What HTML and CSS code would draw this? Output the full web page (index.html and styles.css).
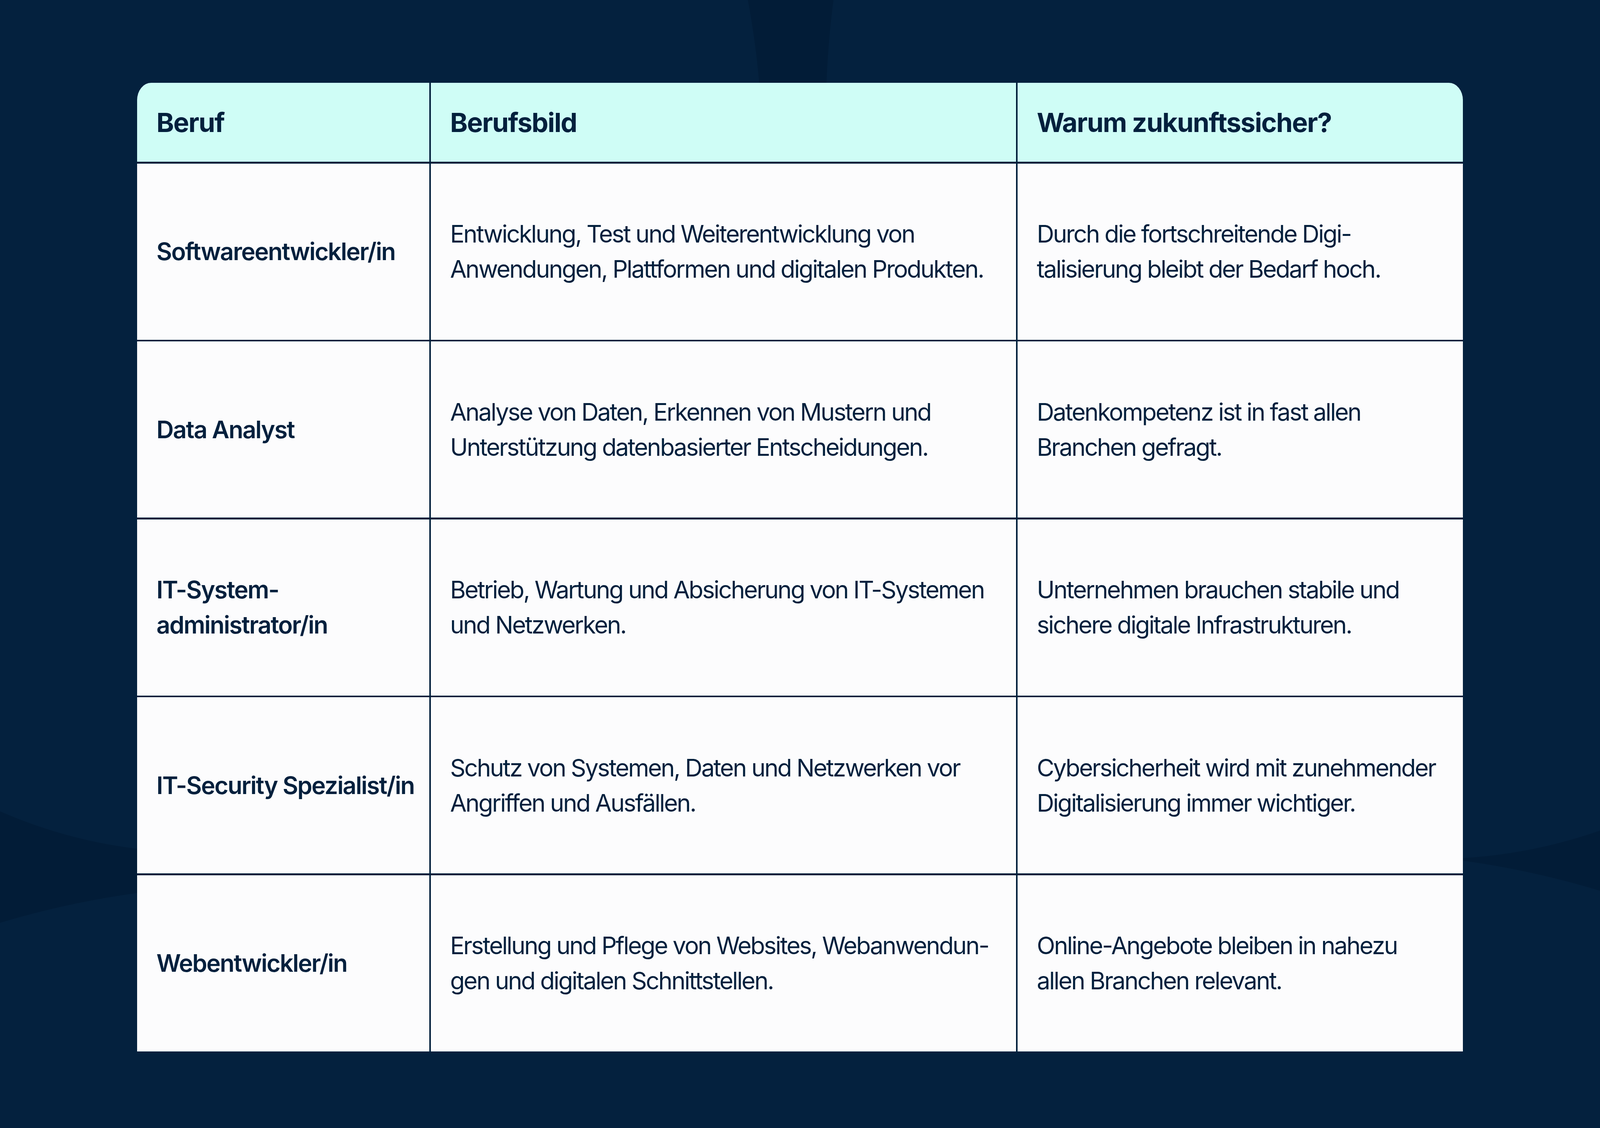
FILE: index.html
```html
<!DOCTYPE html>
<html lang="de">
<head>
<meta charset="utf-8">
<title>Zukunftssichere IT-Berufe</title>
<link rel="stylesheet" href="styles.css">
</head>
<body>
<main class="page">
  <div class="table">
    <div class="cell head">Beruf</div>
    <div class="cell head">Berufsbild</div>
    <div class="cell head">Warum zukunftssicher?</div>

    <div class="cell job">Softwareentwickler/in</div>
    <div class="cell">Entwicklung, Test und Weiterentwicklung von<br>Anwendungen, Plattformen und digitalen Produkten.</div>
    <div class="cell">Durch die fortschreitende Digi-<br>talisierung bleibt der Bedarf hoch.</div>

    <div class="cell job">Data Analyst</div>
    <div class="cell">Analyse von Daten, Erkennen von Mustern und<br>Unterstützung datenbasierter Entscheidungen.</div>
    <div class="cell">Datenkompetenz ist in fast allen<br>Branchen gefragt.</div>

    <div class="cell job">IT-System-<br>administrator/in</div>
    <div class="cell">Betrieb, Wartung und Absicherung von IT-Systemen<br>und Netzwerken.</div>
    <div class="cell">Unternehmen brauchen stabile und<br>sichere digitale Infrastrukturen.</div>

    <div class="cell job">IT-Security Spezialist/in</div>
    <div class="cell">Schutz von Systemen, Daten und Netzwerken vor<br>Angriffen und Ausfällen.</div>
    <div class="cell">Cybersicherheit wird mit zunehmender<br>Digitalisierung immer wichtiger.</div>

    <div class="cell job">Webentwickler/in</div>
    <div class="cell">Erstellung und Pflege von Websites, Webanwendun-<br>gen und digitalen Schnittstellen.</div>
    <div class="cell">Online-Angebote bleiben in nahezu<br>allen Branchen relevant.</div>
  </div>
</main>
</body>
</html>
```

FILE: styles.css
```css
:root {
  /* design grid: 5000 x 2888 units mapped onto the window */
  --u: calc(100vw / 5000);
  --v: calc(100vh / 2888);
}

html, body {
  margin: 0;
  padding: 0;
  overflow: hidden;
}

body {
  height: 100vh;
  font-family: Inter, "Noto Sans", "Liberation Sans", sans-serif;
  color: #03203d;
  background-color: #021c37;
  background-image:
    radial-gradient(ellipse calc(1783 * var(--u)) calc(1783 * var(--v)) at calc(600 * var(--u)) calc(399 * var(--v)), #04213e 99.9%, transparent 100%),
    radial-gradient(ellipse calc(3348 * var(--u)) calc(3348 * var(--v)) at calc(800 * var(--u)) calc(5613 * var(--v)), #04213e 99.95%, transparent 100%),
    radial-gradient(ellipse calc(1900 * var(--u)) calc(1900 * var(--v)) at calc(4480 * var(--u)) calc(300 * var(--v)), #04213e 99.9%, transparent 100%),
    radial-gradient(ellipse calc(3318 * var(--u)) calc(3318 * var(--v)) at calc(4200 * var(--u)) calc(5500 * var(--v)), #04213e 99.95%, transparent 100%);
  background-repeat: no-repeat;
}

.page {
  display: flex;
  justify-content: center;
  padding-top: calc(212 * var(--v));
}

.table {
  display: grid;
  grid-template-columns: calc(913 * var(--u)) calc(1829 * var(--u)) calc(1391 * var(--u));
  grid-template-rows: calc(202 * var(--v)) repeat(5, calc(451 * var(--v)));
  column-gap: calc(4.5 * var(--u));
  row-gap: calc(4.5 * var(--v));
  background: #03203c;
  border-radius: calc(44 * var(--u)) calc(44 * var(--u)) 0 0 / calc(44 * var(--v)) calc(44 * var(--v)) 0 0;
  overflow: hidden;
  flex: none;
}

.cell {
  display: flex;
  align-items: center;
  padding: 0 calc(30 * var(--u)) 0 calc(60 * var(--u));
  background: #fcfcfd;
  font-size: calc(75 * var(--u));
  line-height: calc(90 * var(--v));
  font-weight: 400;
  letter-spacing: -0.049em;
  white-space: nowrap;
  min-width: 0;
}

.cell.head {
  background: #cffdf6;
  font-size: calc(83 * var(--u));
  font-weight: 700;
  letter-spacing: -0.026em;
}

.cell.job {
  font-weight: 600;
  letter-spacing: -0.034em;
}
```
